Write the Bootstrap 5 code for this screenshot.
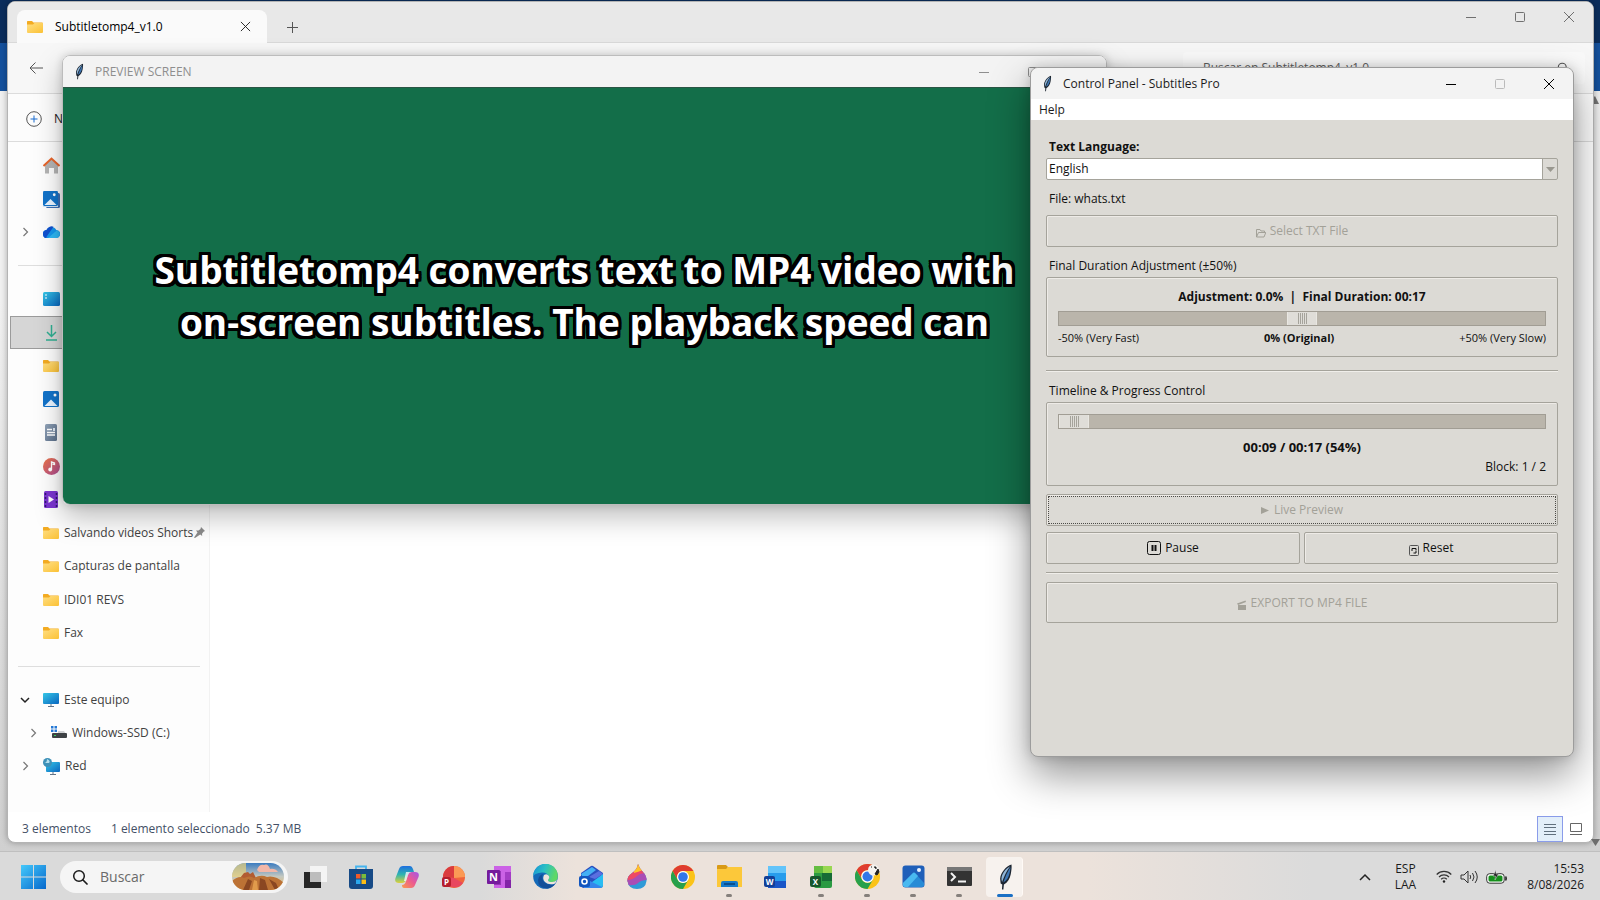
<!DOCTYPE html>
<html lang="es">
<head>
<meta charset="utf-8">
<meta name="viewport" content="width=device-width, initial-scale=1">
<title>Control Panel - Subtitles Pro</title>
<link href="https://cdn.jsdelivr.net/npm/bootstrap@5.3.0/dist/css/bootstrap.min.css" rel="stylesheet">
<style>
  :root { --ui: "Open Sans", "Noto Sans", sans-serif; --tk: #dcdad5; --tk-line: #a5a39b; }
  body { font-family: var(--ui); font-size: 12px; line-height: 16px; color: #1b1b1b; }
  svg { display: block; flex: none; }
  button, input, select { font-family: inherit; font-size: inherit; line-height: inherit; color: inherit; }
  .plain { border: 0; background: none; padding: 0; }

  .desktop { background: linear-gradient(#0b2d5c 0 43px, #15519d 43px 91px, #f1f1f1 91px 300px, #e4e4e4 500px, #d0d0d0 100%); }
  .desktop .page-arrow { position: absolute; right: 0; }

  .os-window { position: absolute; border: 1px solid #9c9c9c; border-radius: 8px; overflow: hidden; display: flex; flex-direction: column; }
  .explorer { inset: 1px 6px 8px 7px; border-color: #b4b4b4; background: #fff; box-shadow: 0 0 6px rgba(0,0,0,.3); }
  .preview { left: 62px; right: 493px; top: 55px; height: 450px; border-color: #bcbcbc; box-shadow: 0 12px 28px rgba(0,0,0,.26), 0 0 8px rgba(0,0,0,.16); }
  .panel { left: 1030px; right: 26px; top: 67px; height: 690px; background: var(--tk); box-shadow: 0 18px 40px rgba(0,0,0,.42), 0 0 12px rgba(0,0,0,.16); }

  .tabs-row { height: 41px; background: #e8e8e8; border-bottom: 1px solid #d9d9d9; }
  .file-tab { width: 250px; height: 33px; margin: 8px 0 0 9px; padding-left: 10px; background: #fafafa; border-radius: 8px 8px 0 0; }
  .capt { height: 30px; color: #707070; }
  .capt button { width: 49px; display: flex; align-items: center; justify-content: center; }
  .address-row { height: 51px; padding: 0 8px 0 21px; background: #f7f7f7; border-bottom: 1px solid #dcdcdc; }
  .find-box { width: 402px; height: 32px; background: #fafafa; border-radius: 4px; color: #555; }
  .find-box input { border: 0; background: none; outline: 0; color: #555; }
  .find-box input::placeholder { color: #5d5d5d; opacity: 1; }
  .command-row { height: 48px; padding: 2px 18px 0; border-bottom: 1px solid #dcdcdc; background: #fcfcfc; }
  .side { width: 202px; border-right: 1px solid #f2f2f2; padding: 7px 0 29px; background: #fdfdfd; }
  .side a, .side .gap-row { flex: 1 1 0; }
  .side a { color: #414141; text-decoration: none; margin-left: 2px; padding-left: 2px; gap: 5px; white-space: nowrap; }
  .side a.picked { background: #d6d6d6; outline: 1px solid #9b9b9b; outline-offset: -1px; }
  .side .arrow { width: 22px; }
  .side a.nested { padding-left: 10px; }
  .side a .pin { margin-left: -4px; }
  .side hr { margin: 0 9px 0 10px; border-color: #bdbdbd; opacity: 1; border-top: 1px solid #dedede; flex: 1; }
  .status { height: 26px; padding-left: 14px; margin-top: 4px; gap: 20px; color: #435066; }
  .status .sel { gap: 6px; }
  .view-btn { width: 26px; height: 26px; }
  .view-btn.on { background: #e3effa; border: 1px solid #8a9cea; }

  .title-row { height: 31px; background: #f3f3f3; }
  .title-row.idle, .title-row.idle .capt { color: #8e8e8e; }
  .stage { background: #136e49; border-top: 1px solid #2a5544; }
  .subtitle-text { font: bold 37px/52px var(--ui); color: #fff; text-align: center;
    text-shadow: 3px 0 #000, -3px 0 #000, 0 3px #000, 0 -3px #000, 3px 2px #000, -3px 2px #000, 3px -2px #000, -3px -2px #000,
      2px 3px #000, -2px 3px #000, 2px -3px #000, -2px -3px #000, 3px 3px #000, -3px -3px #000, 3px -3px #000, -3px 3px #000; }

  .menu-row { height: 21px; background: #fff; }
  .tk-body { padding: 19px 15px 0; color: #111; }
  .tk-combo { height: 22px; border: 1px solid var(--tk-line); border-radius: 2px; padding: 0 2px; appearance: none; color: #111; opacity: 1;
    background: url("data:image/svg+xml,%3Csvg xmlns='http://www.w3.org/2000/svg' width='15' height='20'%3E%3Cpath d='M0 0h15v20H0z' fill='%23dcdad5'/%3E%3Cpath d='M.5 0v20' stroke='%23a5a39b'/%3E%3Cpath d='M4 8h9l-4.500 5z' fill='%2399978f'/%3E%3C/svg%3E") right center no-repeat #fff; }
  .tk-text { padding-left: 3px; margin-top: 11px; }
  .tk-btn { border: 1px solid var(--tk-line); border-radius: 2px; background: var(--tk); box-shadow: inset 1px 1px #eeebe7; height: 32px; color: #111;
    display: flex; align-items: center; justify-content: center; gap: 4px; }
  .tk-btn:disabled { color: #a3a198; }
  .tk-btn.focused { outline: 1px dotted #4c4b47; outline-offset: -3px; }
  .tk-btn.tall { height: 41px; }
  .tk-group { border: 1px solid var(--tk-line); border-radius: 2px; box-shadow: inset 1px 1px #eeebe7; margin-top: 3px; padding: 11px 11px 10px; }
  .tk-rule { height: 2px; background: var(--tk-line); border-bottom: 1px solid #f0eeea; }
  .tk-range { appearance: none; display: block; width: 100%; height: 15px; margin: 0; background: #bab5ab; border: 1px solid #a19d94; }
  .tk-range::-webkit-slider-thumb { appearance: none; width: 30px; height: 13px; border: 1px solid #e9e7e2; border-width: 0 1px;
    background: repeating-linear-gradient(90deg, #a5a39b 0 1px, transparent 1px 2px) 10px 1px / 10px 11px no-repeat #dfddd8; }
  .small-text { font-size: 11px; }
  .time-now { font-size: 13px; margin-top: 10px; }
  .gap-a { margin-top: 6px; }
  .gap-b { margin-top: 13px; }

  .taskbar { height: 49px; padding-top: 1px; border-top: 1px solid #bfbfbf; background: linear-gradient(90deg, #dadada 0 30%, #ece2db 36% 68%, #dbdbdb 82%); }
  .find-pill { width: 228px; height: 32px; border-radius: 16px; background: #f5f5f5; margin-left: 14px; }
  .find-pill input { width: 120px; border: 0; background: none; outline: 0; font-size: 14px; }
  .find-pill input::placeholder { color: #6a6a6a; opacity: 1; }
  .app { width: 46px; height: 48px; position: relative; display: flex; align-items: center; justify-content: center; }
  .app.open::after { content: ""; position: absolute; bottom: 4px; width: 6px; height: 3px; border-radius: 2px; background: #85807c; }
  .app.current::before { content: ""; position: absolute; inset: 4px 5px 4px 4px; border-radius: 4px; background: #f7f2ee; border-right: 1px solid #fffaf6; }
  .app.current::after { width: 16px; background: #1a6fc4; }
  .app svg { position: relative; }
</style>
</head>
<body>
<svg width="0" height="0" class="position-absolute" aria-hidden="true">
  <defs>
    <linearGradient id="gFolder" x1="0" y1="0" x2="1" y2="1"><stop offset="0" stop-color="#ffdf84"/><stop offset="1" stop-color="#fbc135"/></linearGradient>
    <linearGradient id="gBlue" x1="0" y1="0" x2="1" y2="1"><stop offset="0" stop-color="#35c6e6"/><stop offset="1" stop-color="#0a66c0"/></linearGradient>
    <linearGradient id="gWin" x1="0" y1="0" x2="1" y2="1"><stop offset="0" stop-color="#45c9fb"/><stop offset="1" stop-color="#0668cc"/></linearGradient>
    <linearGradient id="gMusic" x1="0" y1="0" x2="1" y2="1"><stop offset="0" stop-color="#ec7445"/><stop offset="1" stop-color="#ab4a96"/></linearGradient>
    <linearGradient id="gGrey" x1="0" y1="0" x2="1" y2="1"><stop offset="0" stop-color="#91a3b8"/><stop offset="1" stop-color="#5b6f8a"/></linearGradient>
    <linearGradient id="gSky" x1="0" y1="0" x2="0" y2="1"><stop offset="0" stop-color="#3c7cc0"/><stop offset=".5" stop-color="#c4c8c0"/><stop offset="1" stop-color="#f0b458"/></linearGradient>
    <linearGradient id="gEdge" x1="0" y1="0" x2="1" y2=".3"><stop offset="0" stop-color="#1590d8"/><stop offset=".5" stop-color="#2bbfc4"/><stop offset="1" stop-color="#5fd866"/></linearGradient>
    <linearGradient id="gCopA" x1="0" y1="0" x2="0" y2="1"><stop offset="0" stop-color="#1d6ee0"/><stop offset=".5" stop-color="#2fb5b0"/><stop offset="1" stop-color="#dfd13a"/></linearGradient>
    <linearGradient id="gCopB" x1="1" y1="0" x2="0" y2="1"><stop offset="0" stop-color="#a457e8"/><stop offset=".5" stop-color="#ec5a90"/><stop offset="1" stop-color="#fb9a4a"/></linearGradient>
    <symbol id="feather" viewBox="0 0 24 24"><path d="M18 .5C13 2 8 8 7.500 13.500l.5 4.500 1.500 1-.3 4.500h1.300L11 19c3.500-2 5.500-5.500 6.300-9.500.7-3.300 1-6.500.7-9z" fill="#1d2631"/><path d="M16.800 2C12 4.500 8.700 9.500 8.700 14l.6 2.500C11 12 13 7 16.800 2z" fill="#8fb4d6"/><path d="M17 3c-3 4.500-5 9.500-6.500 14 3-1.500 5-5 5.700-8.500.5-2 .8-4 .8-5.500z" fill="#3d76b4"/></symbol>
    <symbol id="folder" viewBox="0 0 16 14"><path d="M0 1.500Q0 1 .7 1H5l1.500 1.500H15q1 0 1 1V6H0z" fill="#f3ab22"/><path d="M0 4.500h6L7.500 3H16v9q0 1-1 1H1q-1 0-1-1z" fill="url(#gFolder)"/></symbol>
    <symbol id="pic" viewBox="0 0 16 16"><rect width="16" height="16" rx="1.500" fill="#1273c9"/><path d="M1.500 15L8 8.500l6.500 6.500z" fill="#e9f4ff"/><circle cx="12" cy="4" r="1.500" fill="#fff"/></symbol>
    <symbol id="right" viewBox="0 0 10 10"><path d="M3.500 1l4 4-4 4" fill="none" stroke="#777" stroke-width="1.200"/></symbol>
    <symbol id="mini" viewBox="0 0 12 12"><path d="M1 6.500h10" stroke="currentColor"/></symbol>
    <symbol id="maxi" viewBox="0 0 12 12"><rect x="1.500" y="1.500" width="9" height="9" rx="1" fill="none" stroke="currentColor"/></symbol>
    <symbol id="shut" viewBox="0 0 12 12"><path d="M1 1l10 10M11 1L1 11" stroke="currentColor"/></symbol>
    <symbol id="lens" viewBox="0 0 16 16"><circle cx="7" cy="7" r="5.300" fill="none" stroke="currentColor" stroke-width="1.500"/><path d="M11 11l4 4" stroke="currentColor" stroke-width="1.700" stroke-linecap="round"/></symbol>
    <symbol id="chrome" viewBox="0 0 24 24"><circle cx="12" cy="12" r="12" fill="#fbc318"/><path d="M1.600 6A12 12 0 0 1 22.400 6H12a6 6 0 0 0-5.200 9z" fill="#df3c30"/><path d="M1.600 6A12 12 0 0 0 12 24l5.200-9A6 6 0 0 1 6.800 15z" fill="#27a04c"/><circle cx="12" cy="12" r="6" fill="#fff"/><circle cx="12" cy="12" r="4.800" fill="#3277e8"/></symbol>
  </defs>
</svg>

<div class="vh-100 d-flex flex-column overflow-hidden">
  <main class="desktop flex-grow-1 position-relative">
    <svg class="page-arrow" style="top:95px" width="6" height="10"><path d="M0 9V2l1-1 4 8z" fill="#777"/></svg>

    <section class="os-window explorer" aria-label="Explorador">
      <div class="tabs-row d-flex align-items-start flex-shrink-0">
        <div class="file-tab d-flex align-items-center">
          <svg width="16" height="14"><use href="#folder"/></svg>
          <span class="ms-2 ps-1 flex-grow-1 text-black">Subtitletomp4_v1.0</span>
          <button class="plain me-3" aria-label="Cerrar pestaña"><svg width="11" height="11"><use href="#shut"/></svg></button>
        </div>
        <button class="plain mt-3 ms-3 pt-1 ps-1" aria-label="Nueva pestaña"><svg width="11" height="11"><path d="M5.500 0v11M0 5.500h11" stroke="#555"/></svg></button>
        <div class="capt d-flex ms-auto"><button class="plain" aria-label="Minimizar"><svg width="12" height="12"><use href="#mini"/></svg></button><button class="plain" aria-label="Maximizar"><svg width="12" height="12"><use href="#maxi"/></svg></button><button class="plain" aria-label="Cerrar"><svg width="12" height="12"><use href="#shut"/></svg></button></div>
      </div>
      <div class="address-row d-flex align-items-center flex-shrink-0">
        <button class="plain" aria-label="Atrás"><svg width="14" height="12"><path d="M14 6H1M6.500.5L1 6l5.500 5.500" fill="none" stroke="#555"/></svg></button>
        <label class="find-box d-flex align-items-center ms-auto px-3"><input class="flex-grow-1 p-1" type="search" placeholder="Buscar en Subtitletomp4_v1.0" aria-label="Buscar en carpeta"><svg width="12" height="12"><use href="#lens"/></svg></label>
      </div>
      <div class="command-row d-flex align-items-center flex-shrink-0">
        <button class="plain d-flex align-items-center gap-2"><svg width="16" height="16"><circle cx="8" cy="8" r="7.300" fill="none" stroke="#555"/><path d="M8 4.500v7M4.500 8h7" stroke="#1b6cd0"/></svg><span class="ps-1">Nuevo</span></button>
      </div>
      <div class="d-flex flex-grow-1">
        <nav class="side d-flex flex-column flex-shrink-0">
          <a href="#" class="d-flex align-items-center"><span class="arrow"></span><svg class="ms-1" width="17" height="17" viewBox="0 0 17 17"><path d="M2 8l6.500-6L15 8v8.500h-4V11H6v5.500H2z" fill="#b4b4b4"/><path d="M.5 9l8-7.500 8 7.500" fill="none" stroke="#e7652b" stroke-width="2"/></svg></a>
          <a href="#" class="d-flex align-items-center"><span class="arrow"></span><svg class="ms-1" width="17" height="17"><rect x="3" y="2" width="14" height="15" rx="1.500" fill="#3d70b5"/><rect width="15" height="16" fill="#d3e5f8"/><use href="#pic" width="15" height="15"/></svg></a>
          <a href="#" class="d-flex align-items-center"><svg class="ms-1" width="18" height="10"><use href="#right"/></svg><svg class="ms-1" width="17" height="12" viewBox="0 0 17 12"><path d="M4.500 12A4 4 0 0 1 3.500 4 5.500 5.500 0 0 1 13.300 4 4 4 0 0 1 13 12z" fill="#1597ee"/><path d="M4.500 12A4 4 0 0 1 3.500 4 5.500 5.500 0 0 1 10.500.7L3 11.500z" fill="#1051cf"/><path d="M5 12l9-7.800A4 4 0 0 1 13 12z" fill="#2fb8f5"/></svg></a>
          <div class="gap-row d-flex align-items-center"><hr></div>
          <a href="#" class="d-flex align-items-center"><span class="arrow"></span><svg class="ms-1" width="17" height="14"><rect width="17" height="14" rx="1.500" fill="url(#gBlue)"/><path d="M2 3h2M2 6h2" stroke="#fff"/></svg></a>
          <a href="#" class="d-flex align-items-center picked"><span class="arrow"></span><svg class="ms-1" width="17" height="17"><path d="M8.500 1v11M4 8l4.500 4.500L13 8M3 16h11" fill="none" stroke="#2fae91" stroke-width="1.500"/></svg></a>
          <a href="#" class="d-flex align-items-center"><span class="arrow"></span><svg class="ms-1" width="16" height="14"><use href="#folder"/></svg></a>
          <a href="#" class="d-flex align-items-center"><span class="arrow"></span><svg class="ms-1" width="16" height="16"><use href="#pic"/></svg></a>
          <a href="#" class="d-flex align-items-center"><span class="arrow"></span><svg class="ms-1" width="16" height="17"><rect x="2" width="12" height="17" rx="1.500" fill="url(#gGrey)"/><path d="M4 5.500h5M4 8.500h8M4 11h8" stroke="#fff" stroke-width="1.500"/><path d="M10 4h2v3h-2z" fill="#dfe8f2"/></svg></a>
          <a href="#" class="d-flex align-items-center"><span class="arrow"></span><svg class="ms-1" width="17" height="17"><circle cx="8.500" cy="8.500" r="8.500" fill="url(#gMusic)"/><path d="M8.500 11.500V4l3 1v1.500l-2-.5" fill="none" stroke="#fff" stroke-width="1.300"/><circle cx="7.200" cy="11.500" r="1.900" fill="#fff"/></svg></a>
          <a href="#" class="d-flex align-items-center"><span class="arrow"></span><svg class="ms-1" width="16" height="17"><rect x="1" width="14" height="17" rx="1.500" fill="#7b35d0"/><path d="M2.500 2v14M13.500 2v14" stroke="#321a70" stroke-width="1.500" stroke-dasharray="2 2"/><path d="M5.500 5v7l5.500-3.500z" fill="#fff"/></svg></a>
          <a href="#" class="d-flex align-items-center"><span class="arrow"></span><svg class="ms-1" width="16" height="14"><use href="#folder"/></svg><span>Salvando videos Shorts</span><svg class="pin" width="11" height="11" viewBox="0 0 11 11"><path d="M7 0l4 4-1.500.7-1.500 2 .2 2.300-2-1.500L1 11 0 10.500 3.500 5.500 2 3.500h2.500l2-1.500z" fill="#8a8a8a"/></svg></a>
          <a href="#" class="d-flex align-items-center"><span class="arrow"></span><svg class="ms-1" width="16" height="14"><use href="#folder"/></svg><span>Capturas de pantalla</span></a>
          <a href="#" class="d-flex align-items-center"><span class="arrow"></span><svg class="ms-1" width="16" height="14"><use href="#folder"/></svg><span>IDI01 REVS</span></a>
          <a href="#" class="d-flex align-items-center"><span class="arrow"></span><svg class="ms-1" width="16" height="14"><use href="#folder"/></svg><span>Fax</span></a>
          <div class="gap-row d-flex align-items-center"><hr></div>
          <a href="#" class="d-flex align-items-center"><svg class="ms-1" width="18" height="10"><path d="M5 3l4 4 4-4" fill="none" stroke="#222" stroke-width="1.500"/></svg><svg class="ms-1" width="16" height="14"><rect width="16" height="11" rx="1" fill="url(#gBlue)"/><path d="M8 11v2M5 13.500h6" stroke="#627487"/></svg><span>Este equipo</span></a>
          <a href="#" class="d-flex align-items-center nested"><svg class="ms-1" width="18" height="10"><use href="#right"/></svg><svg class="ms-1" width="16" height="15"><path d="M0 0h2.500v2.500H0zM3.500 0H6v2.500H3.500zM0 3.500h2.500V6H0zM3.500 3.500H6V6H3.500z" fill="#2478d5"/><path d="M7 5h6l2 3H7z" fill="#cfd1d3"/><rect x="1" y="7" width="15" height="5" rx="1" fill="#3e4245"/><path d="M3 9.500h2" stroke="#38d060"/></svg><span>Windows-SSD (C:)</span></a>
          <a href="#" class="d-flex align-items-center"><svg class="ms-1" width="18" height="10"><use href="#right"/></svg><svg class="ms-1" width="17" height="17"><rect x="3" y="4" width="14" height="10" rx="1" fill="url(#gBlue)"/><path d="M10 14v2M7 16.500h6" stroke="#627487"/><circle cx="4.500" cy="4.500" r="4.500" fill="#3e91b8"/><path d="M1 5q3 0 3-4 4 2 2 4z" fill="#b6e0ee"/></svg><span>Red</span></a>
        </nav>
        <div class="flex-grow-1"></div>
      </div>
      <div class="status d-flex align-items-center flex-shrink-0"><span>3 elementos</span><span class="sel d-flex"><span>1 elemento seleccionado</span><span>5.37 MB</span></span>
        <div class="ms-auto d-flex me-1"><button class="plain view-btn on d-flex align-items-center justify-content-center" aria-label="Detalles"><svg width="12" height="12"><path d="M0 1.500h12M0 4.500h12M0 8.500h12M0 11.500h12" stroke="#60707e"/></svg></button><button class="plain view-btn d-flex align-items-center justify-content-center" aria-label="Iconos"><svg width="12" height="12"><path d="M.5.500h11v8H.5zM0 11.500h12" fill="none" stroke="#666"/></svg></button></div>
      </div>
    </section>

    <section class="os-window preview" aria-label="Preview">
      <div class="title-row idle d-flex align-items-center flex-shrink-0 ps-2">
        <svg width="16" height="17"><use href="#feather"/></svg><span class="ms-1 ps-1 flex-grow-1">PREVIEW SCREEN</span>
        <div class="capt d-flex"><button class="plain" aria-label="Minimize"><svg width="12" height="12"><use href="#mini"/></svg></button><button class="plain" aria-label="Maximize"><svg width="12" height="12"><use href="#maxi"/></svg></button><button class="plain" aria-label="Close"><svg width="12" height="12"><use href="#shut"/></svg></button></div>
      </div>
      <div class="stage flex-grow-1 d-flex align-items-center justify-content-center"><p class="subtitle-text m-0">Subtitletomp4 converts text to MP4 video with<br>on-screen subtitles. The playback speed can</p></div>
    </section>

    <section class="os-window panel" aria-label="Control Panel">
      <div class="title-row d-flex align-items-center flex-shrink-0 ps-2">
        <svg width="16" height="17"><use href="#feather"/></svg><span class="ms-1 ps-1 flex-grow-1">Control Panel - Subtitles Pro</span>
        <div class="capt d-flex text-black"><button class="plain" aria-label="Minimize"><svg width="12" height="12"><use href="#mini"/></svg></button><button class="plain" disabled aria-label="Maximize"><svg width="12" height="12" color="#bbb"><use href="#maxi"/></svg></button><button class="plain" aria-label="Close"><svg width="12" height="12"><use href="#shut"/></svg></button></div>
      </div>
      <div class="menu-row d-flex align-items-center flex-shrink-0"><button class="plain ms-2">Help</button></div>
      <div class="tk-body d-flex flex-column">
        <label class="tk-text fw-bold lh-sm m-0" for="lang">Text Language:</label>
        <select class="tk-combo mt-1" id="lang" disabled><option>English</option></select>
        <div class="tk-text">File: whats.txt</div>
        <button class="tk-btn mt-2" disabled><svg class="mt-1" width="10" height="10"><path d="M.5 9V1.500H4l1 1.500h3.500v1.500M.5 9l2-4.500h7.300L8 9z" fill="none" stroke="currentColor"/></svg>Select TXT File</button>
        <label class="tk-text" for="dur">Final Duration Adjustment (±50%)</label>
        <div class="tk-group">
          <div class="fw-bold text-center">Adjustment: 0.0% &nbsp;|&nbsp; Final Duration: 00:17</div>
          <input class="tk-range gap-a" id="dur" type="range" min="-50" max="50" value="0">
          <div class="d-flex justify-content-between mt-1 small-text"><span>-50% (Very Fast)</span><span class="fw-bold">0% (Original)</span><span>+50% (Very Slow)</span></div>
        </div>
        <div class="tk-rule gap-b"></div>
        <label class="tk-text" for="time">Timeline &amp; Progress Control</label>
        <div class="tk-group">
          <input class="tk-range" id="time" type="range" value="0">
          <div class="fw-bold text-center time-now">00:09 / 00:17 (54%)</div>
          <div class="text-end mt-1">Block: 1 / 2</div>
        </div>
        <button class="tk-btn focused mt-2" disabled><svg width="9" height="9"><path d="M0 1l8 3.500L0 8z" fill="currentColor"/></svg>Live Preview</button>
        <div class="d-flex gap-1 gap-a">
          <button class="tk-btn w-50"><svg width="14" height="14"><rect x=".5" y=".5" width="13" height="13" rx="2" fill="none" stroke="currentColor"/><path d="M5.500 4v6M8.500 4v6" stroke="currentColor" stroke-width="2"/></svg>Pause</button>
          <button class="tk-btn w-50"><svg class="mt-1" width="10" height="11"><rect x=".5" y=".5" width="9" height="10" rx="1" fill="none" stroke="#555"/><path d="M3 6V3.500h4V5M7 5.500V8H4.500" fill="none" stroke="currentColor"/></svg>Reset</button>
        </div>
        <div class="tk-rule mt-2"></div>
        <button class="tk-btn tall mt-2" disabled><svg class="mt-1" width="10" height="10"><path d="M1 5h8v5H1zM0 3.500L8.500.5l.5 1.500L1 5z" fill="currentColor"/></svg>EXPORT TO MP4 FILE</button>
      </div>
    </section>
    <svg class="page-arrow bottom-0 mb-1" width="9" height="8"><path d="M0 0h9L4.500 7z" fill="#6d6d6d"/></svg>
  </main>

  <footer class="taskbar d-flex align-items-center flex-shrink-0">
    <button class="plain ms-3 ps-1" aria-label="Inicio"><svg width="26" height="24"><path d="M1 0h12v11.500H1zM14 0h12v11.500H14zM1 12.500h12V24H1zM14 12.500h12V24H14z" fill="url(#gWin)"/></svg></button>
    <label class="find-pill d-flex align-items-center ps-2"><svg class="ms-1" width="16" height="16"><use href="#lens"/></svg><input class="ms-2 ps-1 py-0 pe-0" type="search" placeholder="Buscar" aria-label="Buscar">
      <svg class="ms-auto me-1" width="52" height="27" viewBox="0 0 52 27"><defs><clipPath id="pill"><rect width="52" height="27" rx="13.500"/></clipPath></defs><g clip-path="url(#pill)"><path d="M0 0h52v27H0z" fill="url(#gSky)"/><path d="M0 0h14v14H0z" fill="#e9d27c" opacity=".7"/><path d="M25 7q2-6 7-5 4-2 6 4 5-1 8 3H27z" fill="#f2b7a8"/><path d="M8 15l4-5 4-1 2 2 3-2 3 6z" fill="#b25c31"/><path d="M0 18q7-6 12-3 6-3 10 0 7-4 13-1 8-2 17 6v7H0z" fill="#bc7235"/><path d="M11 27l5-11 4 2-3 9zM27 27l1-12 5 2 3 10zM43 27l-6-11 7 4 3 7z" fill="#8a4722"/><path d="M20 27l2-10 3 1 1 9z" fill="#e09b4c"/></g></svg></label>
    <div class="apps d-flex ms-1 flex-grow-1">
      <button class="plain app" aria-label="Vista de tareas"><svg width="24" height="24"><path d="M1 7h17v16H1z" fill="#262626"/><path d="M7 1h17v16H7z" fill="#f4f4f4"/><path d="M7 7h11v10H7z" fill="#bdbdbd"/></svg></button>
      <button class="plain app" aria-label="Store"><svg width="24" height="24"><path d="M7 6V1.500h10V6" fill="none" stroke="#45b4ef" stroke-width="1.800"/><path d="M0 4h24v17q0 3-3 3H3q-3 0-3-3z" fill="#164a86"/><path d="M7 9h4.500v4.500H7z" fill="#f15a29"/><path d="M12.500 9H17v4.500h-4.500z" fill="#7cbb3b"/><path d="M7 14.500h4.500V19H7z" fill="#2aa8ee"/><path d="M12.500 14.500H17V19h-4.500z" fill="#fbbd16"/></svg></button>
      <button class="plain app" aria-label="Copilot"><svg width="24" height="24"><path d="M8 1h7q2 0 3 3l1 3h-3q-2 0-3 3l-2 5q-1 3-4 3H4q-5 0-3.500-5L4 4q1-3 4-3z" fill="url(#gCopA)"/><path d="M16 23H9q-2 0-2-3 3 0 4-4l2-6q1-3 4-3h3q5 0 3.500 5L20 20q-1 3-4 3z" fill="url(#gCopB)"/><path d="M11 7h5q-2 0-3 3l-2 6H9z" fill="#fff" opacity=".75"/></svg></button>
      <button class="plain app" aria-label="PowerPoint"><svg width="24" height="24"><circle cx="13" cy="12" r="11" fill="#f0653c"/><path d="M13 1a11 11 0 0 0-11 11l11 1z" fill="#da3b3e"/><path d="M13 1a11 11 0 0 1 11 11l-11 1z" fill="#fb9a55"/><path d="M3 12l10 1 9 5a11 11 0 0 1-19-3z" fill="#e8475f"/><rect x="1" y="12" width="9" height="10" rx="2" fill="#b51e2d"/><text x="5.500" y="20" font-size="8" font-weight="bold" fill="#fff" text-anchor="middle">P</text></svg></button>
      <button class="plain app" aria-label="OneNote"><svg width="24" height="24"><path d="M7 1h17v22H7z" fill="#cb62e6"/><path d="M18 7h6v8h-6z" fill="#a43dc5"/><path d="M18 15h6v8h-6z" fill="#8223a7"/><path d="M7 6h7v14H7z" fill="#9534b6"/><rect y="5" width="13" height="14" rx="1" fill="#751b9c"/><text x="6.500" y="16" font-size="11" font-weight="bold" fill="#fff" text-anchor="middle">N</text></svg></button>
      <button class="plain app" aria-label="Edge"><svg width="25" height="25"><circle cx="12.500" cy="12.500" r="12.300" fill="#1469b8"/><path d="M.2 12A12.300 12.300 0 0 1 24.800 12q0 6-6 6-4 0-4-2 2-2 1-4-2-4-7-3.500Q2 9 .2 12z" fill="url(#gEdge)"/><path d="M10 10q-2 4 1 8 4 4 11 2-3 4-8 4.500Q5 24 5 16q1-5 5-6z" fill="#134e98"/><path d="M11 11q3-2 5 1 1 2-1 4 0 2 4 2 3 0 5-2-1 3-3 4-6 1-9-2-3-3-1-7z" fill="#eee4dd"/></svg></button>
      <button class="plain app" aria-label="Outlook"><svg width="25" height="24"><path d="M2 8L12 1q1-.6 2 0l10 7v12q0 3-3 3H5q-3 0-3-3z" fill="#2a4fc0"/><path d="M2 9l11-7 4 3-12 9z" fill="#44b0f4"/><path d="M10 12l10-6 4 3-8 5z" fill="#5b6fe0"/><path d="M24 9v11q0 3-3 3H5z" fill="#29bdf2"/><path d="M5 13l18 9q-1 1-3 1H5z" fill="#3586ec"/><rect y="11" width="11" height="11" rx="2" fill="#1256bf"/><circle cx="5.500" cy="16.500" r="2.500" fill="none" stroke="#fff" stroke-width="1.600"/></svg></button>
      <button class="plain app" aria-label="Paint"><svg width="20" height="25"><defs><clipPath id="drop"><path d="M11 0q1 4 5 8 4 4 3.500 9-1 8-9.500 8T.5 17Q0 12 5 9q5-3 6-9z"/></clipPath></defs><g clip-path="url(#drop)"><path d="M0 0h20v25H0z" fill="#2f9ad7"/><path d="M0 0h20v9L0 18z" fill="#ee4866"/><path d="M0 16q6 0 10-4t10-2v6q-6 0-9 3T0 21z" fill="#a94db5"/><path d="M7 0h9v6q-5 2-9 3z" fill="#ffc32a"/></g></svg></button>
      <button class="plain app" aria-label="Chrome"><svg width="24" height="24"><use href="#chrome"/></svg></button>
      <button class="plain app open" aria-label="Explorador de archivos"><svg width="25" height="23"><path d="M0 1q0-1 1-1h8l2 2-2 4H0z" fill="#d99a16"/><path d="M0 4h9l2-2h14v20H0z" fill="#fcc83a"/><path d="M4 22v-4q0-2 2-2h13q2 0 2 2v4z" fill="#1479c9"/><path d="M7 19h11" stroke="#0a4e8d" stroke-width="2"/></svg></button>
      <button class="plain app" aria-label="Word"><svg width="23" height="24"><rect x="4" y="1" width="18" height="22" rx="2" fill="#279cec"/><path d="M4 1h18v7H4z" fill="#63c4fa"/><path d="M4 16h18v7H4z" fill="#1955c7"/><rect y="11" width="11" height="11" rx="2" fill="#123f96"/><text x="5.500" y="19.500" font-size="8" font-weight="bold" fill="#fff" text-anchor="middle">W</text></svg></button>
      <button class="plain app open" aria-label="Excel"><svg width="23" height="24"><rect x="4" y="1" width="18" height="22" rx="2" fill="#2b9a42"/><path d="M4 1h9v7H4z" fill="#65bd41"/><path d="M13 1h9v7h-9z" fill="#99d751"/><path d="M12 8h10v8H12z" fill="#176b36"/><rect y="11" width="11" height="11" rx="2" fill="#17562d"/><text x="5.500" y="19.500" font-size="8" font-weight="bold" fill="#fff" text-anchor="middle">X</text></svg></button>
      <button class="plain app open" aria-label="Chrome, perfil"><svg width="25" height="25"><use href="#chrome" width="25" height="25"/><circle cx="18.500" cy="6" r="5.500" fill="#f5f3ef"/><path d="M16 3h1M19 3h2v2M20 10l3-5 1 3-2 3z" stroke="#222" fill="#222"/></svg></button>
      <button class="plain app open" aria-label="Fotos"><svg width="23" height="23"><rect width="22" height="22" rx="3" x=".5" y=".5" fill="#1f5fb9"/><path d="M1 18L11 8q1-1 2 0l9 10v2q0 2-3 2H4q-3 0-3-2z" fill="#278bd6"/><path d="M1 18L11 8q1-1 2 0l3 3L6 22H4q-3 0-3-2z" fill="#49b9f0"/><circle cx="17" cy="5" r="2" fill="#e9f3ff"/></svg></button>
      <button class="plain app open" aria-label="Terminal"><svg width="25" height="19"><rect width="25" height="19" rx="1" fill="#333"/><path d="M0 0h25v4H0z" fill="#777"/><path d="M4 6l4 4-4 4M11 14.500h8" fill="none" stroke="#f3f3f3" stroke-width="2"/></svg></button>
      <button class="plain app open current" aria-label="Subtitles Pro"><svg width="26" height="26"><use href="#feather"/></svg></button>
    </div>
    <button class="plain me-4" aria-label="Iconos ocultos"><svg width="12" height="8"><path d="M1 7l5-5 5 5" fill="none" stroke="#222" stroke-width="1.500"/></svg></button>
    <button class="plain text-center">ESP<br>LAA</button>
    <button class="plain d-flex align-items-center gap-2 mx-3 px-1" aria-label="Red, sonido y batería">
      <svg width="16" height="13" viewBox="0 0 16 13"><path d="M.7 4.500a10.300 10.300 0 0 1 14.600 0M3 7a7 7 0 0 1 10 0M5.200 9.300a4 4 0 0 1 5.600 0" fill="none" stroke="#333" stroke-width="1.200"/><circle cx="8" cy="11.500" r="1.200" fill="#222"/></svg>
      <svg width="18" height="14"><path d="M1 5h3l4-4v12L4 9H1z" fill="none" stroke="#333"/><path d="M10 5q1.500 2 0 4M12.500 3q3 4 0 8M15 1q4.500 6 0 12" fill="none" stroke="#333"/></svg>
      <svg width="21" height="14"><rect x=".7" y="3.700" width="17.500" height="9.500" rx="3" fill="#fff" stroke="#333"/><rect x="2.500" y="5.500" width="14" height="6" rx="1.500" fill="#158f1b"/><path d="M19.500 6.500q1.500 2 0 4" stroke="#333" stroke-width="1.500"/><path d="M10 0L7 6h2.500L9 10l3.500-6H10z" fill="#222" stroke="#ddd" stroke-width=".5"/></svg>
    </button>
    <button class="plain text-end me-3">15:53<br>8/08/2026</button>
  </footer>
</div>
<script src="https://cdn.jsdelivr.net/npm/bootstrap@5.3.0/dist/js/bootstrap.bundle.min.js"></script>
</body>
</html>
